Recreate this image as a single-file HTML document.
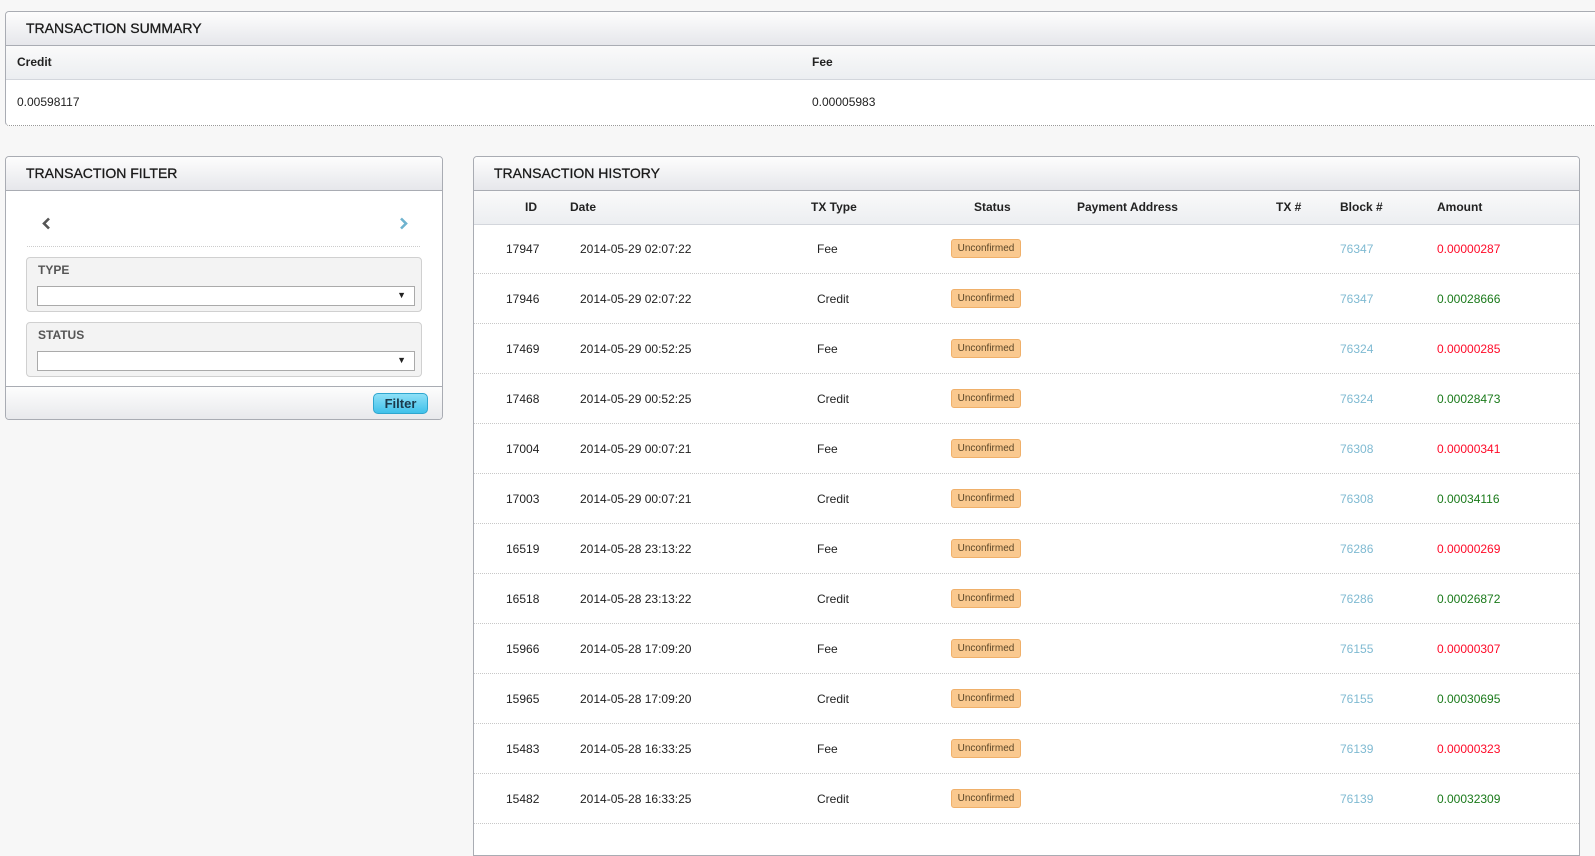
<!DOCTYPE html>
<html><head><style>
*{box-sizing:border-box;margin:0;padding:0}
body{width:1595px;height:830px;overflow:hidden;background:#f7f7f7;font-family:"Liberation Sans",Arial,sans-serif;font-size:12px;color:#222;position:relative}
.abs{position:absolute}
.panel{position:absolute;background:#fff;border:1px solid #a9acb3;border-radius:4px;overflow:hidden}
.hd{position:absolute;left:0;right:0;top:0;background:linear-gradient(#fdfdfd,#e6e7eb);border-bottom:1px solid #a9acb3}
.hd span{position:absolute;left:20px;font-size:14px;color:#1a1a1a;-webkit-text-stroke:0.3px #1a1a1a}
.th{position:absolute;left:0;right:0;background:linear-gradient(#fafafa,#eceef1);border-bottom:1px solid #d3d6dc}
.b{font-weight:bold}
.row{position:absolute;left:0;right:0;height:50px;border-bottom:1px dotted #c8c8c8}
.row div{position:absolute;top:18px}
.badge{top:15px!important;width:70px;height:19px;background:#fac98f;border:1px solid #f0b06a;border-radius:3px;font-size:10px;color:#5a4628;text-align:center;line-height:17px}
.blk{color:#7fbad2}
.red{color:#ff0a28}
.grn{color:#1a7a1a}
.fs{position:absolute;left:20px;width:396px;height:55px;background:#f3f3f3;border:1px solid #d0d0d0;border-radius:4px}
.fs span{position:absolute;left:11px;top:5px;font-weight:bold;color:#555;font-size:12px}
.sel{position:absolute;left:10px;right:6px;top:28px;height:20px;background:#fff;border:1px solid #aaa;font-size:10px}
.sel:after{content:"▼";position:absolute;right:8px;top:3px;font-size:9px}
</style></head><body>

<div class="panel" style="left:5px;top:11px;width:1600px;height:115px;border-radius:4px 0 0 4px;border-bottom:1px dotted #999">
 <div class="hd" style="height:34px"><span style="top:8px">TRANSACTION SUMMARY</span></div>
 <div class="th" style="top:34px;height:34px"><div class="abs b" style="left:11px;top:9px">Credit</div><div class="abs b" style="left:806px;top:9px">Fee</div></div>
 <div class="abs" style="left:11px;top:83px">0.00598117</div>
 <div class="abs" style="left:806px;top:83px">0.00005983</div>
</div>

<div class="panel" style="left:5px;top:156px;width:438px;height:264px">
 <div class="hd" style="height:34px"><span style="top:8px">TRANSACTION FILTER</span></div>
 <svg class="abs" style="left:35px;top:60px" width="10" height="13" viewBox="0 0 10 13"><path d="M8 1.5 L3 6.5 L8 11.5" fill="none" stroke="#555" stroke-width="2.6"/></svg>
 <svg class="abs" style="left:393px;top:60px" width="10" height="13" viewBox="0 0 10 13"><path d="M2 1.5 L7 6.5 L2 11.5" fill="none" stroke="#6fb3cf" stroke-width="2.6"/></svg>
 <div class="abs" style="left:21px;right:22px;top:89px;border-top:1px dotted #ccc"></div>
 <div class="fs" style="top:100px"><span>TYPE</span><div class="sel"></div></div>
 <div class="fs" style="top:165px"><span>STATUS</span><div class="sel"></div></div>
 <div class="abs" style="left:0;right:0;top:229px;bottom:0;background:linear-gradient(#fdfdfd,#e8e9ec);border-top:1px solid #a9acb3"></div>
 <div class="abs" style="left:367px;top:236px;width:55px;height:21px;background:linear-gradient(#8ee0f7,#40c1ea);border:1px solid #2fa6cf;border-radius:5px;text-align:center;font-weight:bold;font-size:13px;line-height:19px;color:#1b3a4c">Filter</div>
</div>

<div class="panel" style="left:473px;top:156px;width:1107px;height:700px;border-radius:4px 4px 0 0">
 <div class="hd" style="height:34px"><span style="top:8px">TRANSACTION HISTORY</span></div>
 <div class="th b" style="top:34px;height:34px">
  <div class="abs" style="left:51px;top:9px">ID</div>
  <div class="abs" style="left:96px;top:9px">Date</div>
  <div class="abs" style="left:337px;top:9px">TX Type</div>
  <div class="abs" style="left:500px;top:9px">Status</div>
  <div class="abs" style="left:603px;top:9px">Payment Address</div>
  <div class="abs" style="left:802px;top:9px">TX #</div>
  <div class="abs" style="left:866px;top:9px">Block #</div>
  <div class="abs" style="left:963px;top:9px">Amount</div>
 </div>
 <div class="abs" style="left:0;right:0;top:67px">
<div class="row" style="top:0"><div style="left:32px">17947</div><div style="left:106px">2014-05-29 02:07:22</div><div style="left:343px">Fee</div><div class="badge" style="left:477px">Unconfirmed</div><div class="blk" style="left:866px">76347</div><div class="red" style="left:963px">0.00000287</div></div>
<div class="row" style="top:50px"><div style="left:32px">17946</div><div style="left:106px">2014-05-29 02:07:22</div><div style="left:343px">Credit</div><div class="badge" style="left:477px">Unconfirmed</div><div class="blk" style="left:866px">76347</div><div class="grn" style="left:963px">0.00028666</div></div>
<div class="row" style="top:100px"><div style="left:32px">17469</div><div style="left:106px">2014-05-29 00:52:25</div><div style="left:343px">Fee</div><div class="badge" style="left:477px">Unconfirmed</div><div class="blk" style="left:866px">76324</div><div class="red" style="left:963px">0.00000285</div></div>
<div class="row" style="top:150px"><div style="left:32px">17468</div><div style="left:106px">2014-05-29 00:52:25</div><div style="left:343px">Credit</div><div class="badge" style="left:477px">Unconfirmed</div><div class="blk" style="left:866px">76324</div><div class="grn" style="left:963px">0.00028473</div></div>
<div class="row" style="top:200px"><div style="left:32px">17004</div><div style="left:106px">2014-05-29 00:07:21</div><div style="left:343px">Fee</div><div class="badge" style="left:477px">Unconfirmed</div><div class="blk" style="left:866px">76308</div><div class="red" style="left:963px">0.00000341</div></div>
<div class="row" style="top:250px"><div style="left:32px">17003</div><div style="left:106px">2014-05-29 00:07:21</div><div style="left:343px">Credit</div><div class="badge" style="left:477px">Unconfirmed</div><div class="blk" style="left:866px">76308</div><div class="grn" style="left:963px">0.00034116</div></div>
<div class="row" style="top:300px"><div style="left:32px">16519</div><div style="left:106px">2014-05-28 23:13:22</div><div style="left:343px">Fee</div><div class="badge" style="left:477px">Unconfirmed</div><div class="blk" style="left:866px">76286</div><div class="red" style="left:963px">0.00000269</div></div>
<div class="row" style="top:350px"><div style="left:32px">16518</div><div style="left:106px">2014-05-28 23:13:22</div><div style="left:343px">Credit</div><div class="badge" style="left:477px">Unconfirmed</div><div class="blk" style="left:866px">76286</div><div class="grn" style="left:963px">0.00026872</div></div>
<div class="row" style="top:400px"><div style="left:32px">15966</div><div style="left:106px">2014-05-28 17:09:20</div><div style="left:343px">Fee</div><div class="badge" style="left:477px">Unconfirmed</div><div class="blk" style="left:866px">76155</div><div class="red" style="left:963px">0.00000307</div></div>
<div class="row" style="top:450px"><div style="left:32px">15965</div><div style="left:106px">2014-05-28 17:09:20</div><div style="left:343px">Credit</div><div class="badge" style="left:477px">Unconfirmed</div><div class="blk" style="left:866px">76155</div><div class="grn" style="left:963px">0.00030695</div></div>
<div class="row" style="top:500px"><div style="left:32px">15483</div><div style="left:106px">2014-05-28 16:33:25</div><div style="left:343px">Fee</div><div class="badge" style="left:477px">Unconfirmed</div><div class="blk" style="left:866px">76139</div><div class="red" style="left:963px">0.00000323</div></div>
<div class="row" style="top:550px"><div style="left:32px">15482</div><div style="left:106px">2014-05-28 16:33:25</div><div style="left:343px">Credit</div><div class="badge" style="left:477px">Unconfirmed</div><div class="blk" style="left:866px">76139</div><div class="grn" style="left:963px">0.00032309</div></div>
 </div>
</div>
</body></html>
